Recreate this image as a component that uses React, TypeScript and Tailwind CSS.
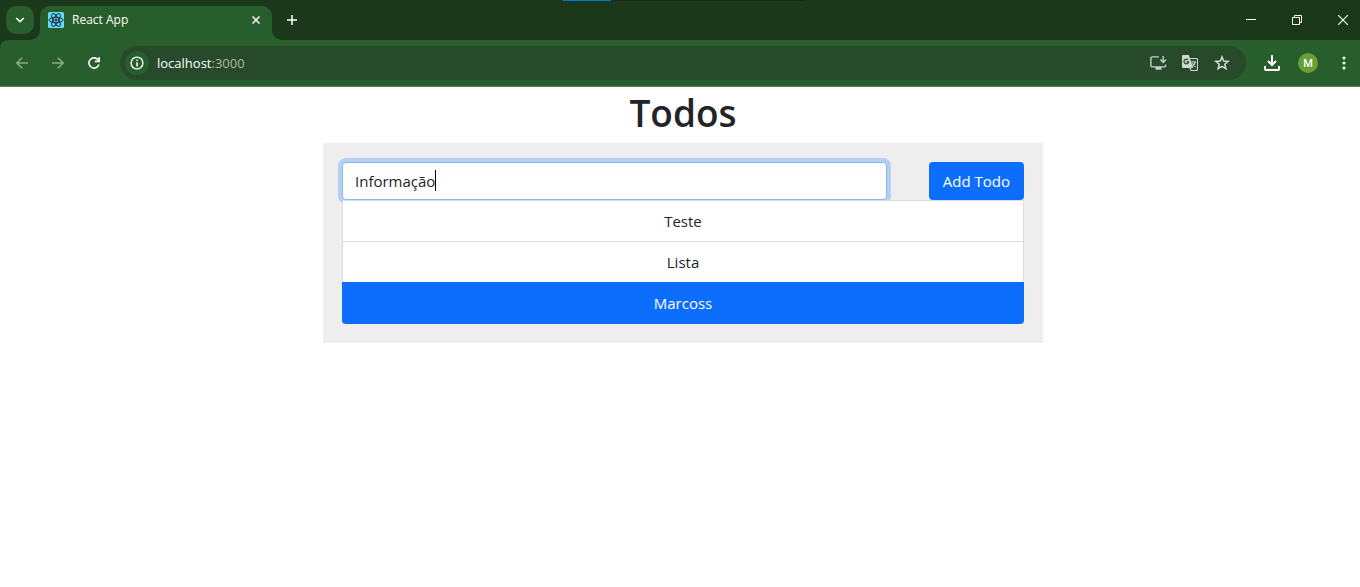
import { useState } from "react";

const todos = ["Teste", "Lista", "Marcoss"];

function ReactMark() {
  return (
    <svg width="16" height="16" viewBox="0 0 16 16" aria-hidden="true">
      <rect width="16" height="16" rx="1.5" fill="#61dafb" />
      <g fill="none" stroke="#20303c" strokeWidth="1">
        <ellipse cx="8" cy="8" rx="7" ry="2.7" />
        <ellipse cx="8" cy="8" rx="7" ry="2.7" transform="rotate(60 8 8)" />
        <ellipse cx="8" cy="8" rx="7" ry="2.7" transform="rotate(120 8 8)" />
      </g>
      <circle cx="8" cy="8" r="1.3" fill="#20303c" />
    </svg>
  );
}

function TabFlare({ className }: { className: string }) {
  return (
    <svg className={className} width="10" height="10" viewBox="0 0 10 10" aria-hidden="true">
      <path d="M10 0v10H0A10 10 0 0 0 10 0z" fill="#275e2b" />
    </svg>
  );
}

function TabStrip() {
  return (
    <div className="relative flex h-10 items-start bg-[#1b381b]">
      <div className="absolute left-[563px] top-0 flex h-px w-[241px] bg-[#222222]">
        <div className="w-12 bg-[#0078d4]" />
      </div>
      <button aria-label="Search tabs" className="ml-1.5 mt-1.5 flex size-7 items-center justify-center rounded-[10px] bg-[#275e2b]">
        <svg width="10" height="6" viewBox="0 0 10 6" fill="none" stroke="#fff" strokeWidth="1.7">
          <path d="M1.2 1 5 4.6 8.8 1" />
        </svg>
      </button>
      <div className="relative ml-1.5 mt-1.5 flex h-[34px] w-[232px] items-start rounded-t-[10px] bg-[#275e2b] px-2">
        <TabFlare className="absolute -left-2.5 bottom-0" />
        <TabFlare className="absolute -right-2.5 bottom-0 -scale-x-100" />
        <div className="flex h-7 w-full items-center">
          <ReactMark />
          <span className="ml-2 flex-1 text-[12px] leading-4 text-white">React App</span>
          <button aria-label="Close tab" className="flex size-4 items-center justify-center">
            <svg width="8" height="8" viewBox="0 0 8 8" stroke="#fff" strokeWidth="1.5">
              <path d="M.5.5l7 7M7.5.5l-7 7" />
            </svg>
          </button>
        </div>
      </div>
      <button aria-label="New tab" className="ml-1.5 mt-1.5 flex size-7 items-center justify-center">
        <svg width="10" height="10" viewBox="0 0 10 10" stroke="#fff" strokeWidth="1.5">
          <path d="M5 0v10M0 5h10" />
        </svg>
      </button>
      <div className="ml-auto flex h-10 items-center">
        <button aria-label="Minimize" className="flex h-10 w-[46px] items-center justify-center">
          <svg width="10" height="10" viewBox="0 0 10 10" fill="#fff">
            <path d="M0 4h10v1H0z" />
          </svg>
        </button>
        <button aria-label="Restore" className="flex h-10 w-[46px] items-center justify-center">
          <svg width="10" height="10" viewBox="0 0 10 10" fill="none" stroke="#fff">
            <path d="M.5 2.5h7v7h-7zM2.5 2.5v-2h7v7h-2" />
          </svg>
        </button>
        <button aria-label="Close" className="flex h-10 w-10 items-center justify-center pl-1.5">
          <svg width="10" height="10" viewBox="0 0 10 10" stroke="#fff" strokeWidth="1.1">
            <path d="M0 0l10 10M10 0 0 10" />
          </svg>
        </button>
      </div>
    </div>
  );
}

function Toolbar() {
  return (
    <div className="bg-[#1b381b]">
      <div className="flex h-[47px] items-center rounded-tl-lg border-b border-[#4f8553] bg-[#275e2b] pl-2 pr-0.5">
        <button aria-label="Back" className="flex size-7 items-center justify-center">
          <svg width="12" height="12" viewBox="0 0 12 12" fill="none" stroke="#8aa98c" strokeWidth="1.5">
            <path d="M12 6H1M6.2.7.9 6l5.3 5.3" />
          </svg>
        </button>
        <button aria-label="Forward" className="ml-2 flex size-7 items-center justify-center">
          <svg width="12" height="12" viewBox="0 0 12 12" fill="none" stroke="#8aa98c" strokeWidth="1.5">
            <path d="M0 6h11M5.8.7 11.1 6l-5.3 5.3" />
          </svg>
        </button>
        <button aria-label="Reload" className="ml-2 flex size-7 items-center justify-center">
          <svg width="12" height="12" viewBox="0 0 12 12" fill="none" stroke="#fff" strokeWidth="1.6">
            <path d="M10.9 7.4A5.1 5.1 0 1 1 10.3 3.2" />
            <path d="M11.2 0v4.4H6.8" />
          </svg>
        </button>
        <div className="ml-3 flex h-[34px] flex-1 items-center rounded-full bg-[#264a2a] pl-[5px] pr-2.5">
          <button aria-label="Site information" className="flex size-6 items-center justify-center rounded-full bg-[#275e2b]">
            <svg width="14" height="14" viewBox="0 0 14 14" fill="none">
              <circle cx="7" cy="7" r="5.9" stroke="#fff" strokeWidth="1.4" />
              <path d="M6.3 6.2h1.5v4.2H6.3zM6.3 3.6h1.5v1.5H6.3z" fill="#fff" />
            </svg>
          </button>
          <span className="ml-2 flex-1 text-[13px] leading-5 text-white">
            localhost<span className="text-[#a9b8aa]">:3000</span>
          </span>
          <button aria-label="Install app" className="flex size-7 items-center justify-center">
            <svg width="17" height="14" viewBox="0 0 17 14" fill="none" stroke="#c8d0c9" strokeWidth="1.4">
              <path d="M9 .9H2.2c-.8 0-1.3.4-1.3 1.2v7.6c0 .8.5 1.2 1.3 1.2h12.1c.8 0 1.3-.4 1.3-1.2V8.5" />
              <path d="M13.2 0v6.2M10.4 3.6l2.8 2.8L16 3.6" />
              <path d="M5.5 11h6v2.7h-6z" fill="#c8d0c9" stroke="none" />
            </svg>
          </button>
          <button aria-label="Translate this page" className="ml-1 flex size-7 items-center justify-center">
            <svg width="16" height="16" viewBox="0 0 16 16" fill="none">
              <path d="M1.2 0h5.6l4.4 13H1.3C.4 13 0 12.5 0 11.7V1.3C0 .5.4 0 1.2 0z" fill="#d0d6d0" />
              <path d="M7.6 3.5h6.8c.7 0 1.1.4 1.1 1.1v9.8c0 .7-.4 1.1-1.1 1.1H9.2l-1.4-2.7" stroke="#d0d6d0" strokeWidth="1.1" />
              <path d="M6 4.9A2.3 2.3 0 1 0 6.6 6.8H4.3" stroke="#264a2a" strokeWidth="1.2" />
              <path d="M9.2 7h5M11.7 5.8V7M13.2 7.1c-.3 2-1.6 3.5-3.2 4.5M10.4 8.1c.7 1.7 1.9 2.9 3.2 4" stroke="#d0d6d0" strokeWidth="1.1" />
            </svg>
          </button>
          <button aria-label="Bookmark this page" className="ml-1 flex size-7 items-center justify-center">
            <svg width="16" height="16" viewBox="0 0 16 16" fill="none" stroke="#d3dbd4" strokeWidth="1.5">
              <path d="M8 1.9 9.7 6l4.5.4-3.4 2.9 1.1 4.4L8 11.4l-3.9 2.3 1.1-4.4L1.8 6.4 6.3 6z" />
            </svg>
          </button>
        </div>
        <button aria-label="Downloads" className="ml-3 flex size-7 items-center justify-center">
          <svg width="16" height="16" viewBox="0 0 16 16" fill="none" stroke="#fff" strokeWidth="2">
            <path d="M8 0v9.5M4 6l4 4 4-4" />
            <path d="M1 11v3c0 .6.4 1 1 1h12c.6 0 1-.4 1-1v-3" />
          </svg>
        </button>
        <button aria-label="Profile" className="ml-3 flex size-5 items-center justify-center rounded-full bg-[#689f38] font-[Roboto,sans-serif] text-[11px] font-medium leading-none text-white">
          M
        </button>
        <button aria-label="Menu" className="ml-3 flex size-7 items-center justify-center">
          <svg width="4" height="14" viewBox="0 0 4 14" fill="#fff">
            <circle cx="2" cy="2" r="1.5" />
            <circle cx="2" cy="7" r="1.5" />
            <circle cx="2" cy="12" r="1.5" />
          </svg>
        </button>
      </div>
    </div>
  );
}

export default function App() {
  const [text, setText] = useState("Informação");
  const [active, setActive] = useState(2);

  return (
    <div className="min-h-screen bg-white font-['Open_Sans',sans-serif] text-[#212529]">
      <header>
        <TabStrip />
        <Toolbar />
      </header>
      <main className="pl-1.5">
        <h1 className="pb-1.5 pt-0.5 text-center text-[37px] font-semibold leading-[48px]">Todos</h1>
        <section className="mx-auto max-w-[720px] bg-[#eeeeee] p-[19px]">
          <form className="flex gap-[42px]" onSubmit={(e) => e.preventDefault()}>
            <div className="relative flex-1">
              <input
                aria-label="Todo"
                value={text}
                onChange={(e) => setText(e.target.value)}
                className="h-[38px] w-full rounded border border-[#86b7fe] bg-white px-3 text-[15px] outline-none ring-4 ring-[#b6d0f4]"
              />
              <span className="absolute left-[93px] top-2 h-[21px] w-px bg-black" />
            </div>
            <button type="submit" className="h-[38px] rounded bg-[#0d6efd] px-3.5 text-[15px] text-white">
              Add Todo
            </button>
          </form>
          <ul className="relative overflow-hidden rounded bg-[#dcdcdc]">
            {todos.map((todo, i) => (
              <li key={todo}>
                <button
                  onClick={() => setActive(i)}
                  className={
                    i === active
                      ? "h-[42px] w-full bg-[#0d6efd] text-[15px] text-white"
                      : "h-[41px] w-full border-x border-t border-[#dcdcdc] bg-white text-[15px]"
                  }
                >
                  {todo}
                </button>
              </li>
            ))}
          </ul>
        </section>
      </main>
    </div>
  );
}
